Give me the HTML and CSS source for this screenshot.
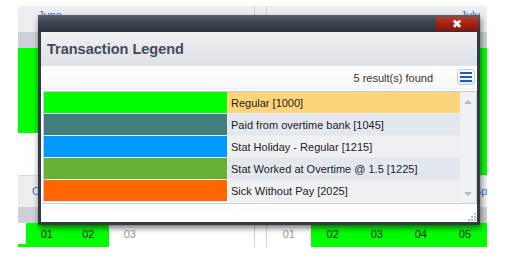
FILE: index.html
```html
<!DOCTYPE html>
<html>
<head>
<meta charset="utf-8">
<link rel="stylesheet" href="styles.css">
</head>
<body>
<div class="cal">
  <div class="cal-row first">
    <div class="month left">
      <div class="m-head"><a class="m-link">June</a></div>
      <div class="m-band"></div>
      <div class="m-body"><div class="days-block short"></div></div>
    </div>
    <div class="m-gap"></div>
    <div class="month right">
      <div class="m-head end"><a class="m-link">July</a></div>
      <div class="m-band"></div>
      <div class="m-body"><div class="days-block tall"></div></div>
    </div>
  </div>
  <div class="cal-row second">
    <div class="month left">
      <div class="m-head2"><a class="m-link">October</a></div>
      <div class="m-band"></div>
      <div class="days-row">
        <div class="day pad"></div>
        <div class="day on">01</div>
        <div class="day on">02</div>
        <div class="day off">03</div>
      </div>
    </div>
    <div class="m-gap2"></div>
    <div class="month right">
      <div class="m-head2 end"><a class="m-link">Spe</a></div>
      <div class="m-band"></div>
      <div class="days-row">
        <div class="day off wide">01</div>
        <div class="day on wide">02</div>
        <div class="day on wide">03</div>
        <div class="day on wide">04</div>
        <div class="day on wide">05</div>
      </div>
    </div>
  </div>
</div>

<div class="dialog">
  <div class="titlebar">
    <div class="close">&#x2716;</div>
  </div>
  <div class="d-head">Transaction Legend</div>
  <div class="toolbar">
    <span class="count">5 result(s) found</span>
    <div class="menu-btn">
      <svg width="12" height="10" viewBox="0 0 12 10"><rect x="0" y="0" width="12" height="2" fill="#1d5fb8"/><rect x="0" y="4" width="12" height="2" fill="#1d5fb8"/><rect x="0" y="8" width="12" height="2" fill="#1d5fb8"/></svg>
    </div>
  </div>
  <div class="grid">
    <div class="rows">
      <div class="row sel"><div class="swatch" style="background:#00ff00"></div><div class="label">Regular [1000]</div></div>
      <div class="row alt"><div class="swatch" style="background:#417f7e"></div><div class="label">Paid from overtime bank [1045]</div></div>
      <div class="row"><div class="swatch" style="background:#0099ff"></div><div class="label">Stat Holiday - Regular [1215]</div></div>
      <div class="row alt"><div class="swatch" style="background:#66b034"></div><div class="label">Stat Worked at Overtime @ 1.5 [1225]</div></div>
      <div class="row"><div class="swatch" style="background:#ff6600"></div><div class="label">Sick Without Pay [2025]</div></div>
    </div>
    <div class="scroll">
      <svg class="arr" width="8" height="5" viewBox="0 0 8 5"><path d="M0 5 L4 1 L8 5 Z" fill="#b5b8bc"/></svg>
      <svg class="arr" width="8" height="5" viewBox="0 0 8 5"><path d="M0 0 L4 4 L8 0 Z" fill="#b5b8bc"/></svg>
    </div>
  </div>
  <div class="d-foot">
    <svg class="grip" width="8" height="8" viewBox="0 0 8 8"><g fill="#b9bcc0"><rect x="6" y="0" width="2" height="2"/><rect x="3" y="3" width="2" height="2"/><rect x="6" y="3" width="2" height="2"/><rect x="0" y="6" width="2" height="2"/><rect x="3" y="6" width="2" height="2"/><rect x="6" y="6" width="2" height="2"/></g></svg>
  </div>
</div>
</body>
</html>
```
FILE: styles.css
```css
html, body {
  margin: 0;
  padding: 0;
}
body {
  width: 519px;
  height: 262px;
  overflow: hidden;
  position: relative;
  background: #ffffff;
  font-family: "Liberation Sans", Arial, sans-serif;
  font-size: 11px;
  color: #222;
}
.cal {
  margin: 6px 0 0 18px;
  width: 469px;
}
.cal-row {
  display: flex;
}
.month {
  display: flex;
  flex-direction: column;
}
.month.left {
  width: 236px;
  border-right: 1px solid #cfd3d8;
}
.month.right {
  width: 220px;
  border-left: 1px solid #cfd3d8;
  overflow: hidden;
}
.m-gap {
  width: 11px;
  background: linear-gradient(#eceef1 0, #eceef1 26px, #ffffff 26px);
}
.m-gap2 {
  width: 11px;
}
.m-head {
  height: 26px;
  background: #eceef1;
  padding: 3px 0 0 20px;
  box-sizing: border-box;
}
.m-head.end {
  padding: 3px 7px 0 0;
  text-align: right;
}
.m-head2 {
  height: 32px;
  border-top: 1px solid #d7dbe0;
  background: #eceef1;
  padding: 9px 0 0 14px;
  box-sizing: border-box;
}
.m-head2.end {
  padding: 9px 0 0 207px;
  white-space: nowrap;
}
.m-link {
  color: #3a6fc8;
  font-size: 11px;
  text-decoration: none;
}
.m-band {
  height: 16px;
  background: #cdd1d7;
}
.m-body {
  height: 127px;
  background: #ffffff;
}
.days-block {
  background: #00ff00;
}
.days-block.short {
  height: 85px;
}
.days-block.tall {
  height: 127px;
}
.days-row {
  display: flex;
  height: 24px;
}
.day {
  width: 41.5px;
  line-height: 22px;
  text-align: center;
  font-size: 11px;
  color: #111;
}
.day.pad {
  width: 8px;
  background: linear-gradient(#fff 0, #fff 21px, #00ff00 21px);
}
.day.on {
  background: #00ff00;
}
.day.off {
  color: #999;
}
.day.wide {
  width: 44.5px;
}
.day.wide:first-child {
  width: 44px;
}

/* dialog */
.dialog {
  position: absolute;
  left: 38px;
  top: 15px;
  width: 442px;
  height: 210px;
  box-sizing: border-box;
  border: 3px solid #333a45;
  border-top: 0;
  background: #ffffff;
  display: flex;
  flex-direction: column;
  box-shadow: 1px 3px 6px rgba(0, 0, 0, 0.55);
}
.titlebar {
  height: 17px;
  margin: 0 -3px;
  background: linear-gradient(#5a626e 0, #3d4551 45%, #2c323c 100%);
  display: flex;
  justify-content: flex-end;
  align-items: flex-start;
  padding: 2px 2px 0 0;
  box-sizing: border-box;
}
.close {
  width: 42px;
  height: 14px;
  background: linear-gradient(#c03a28 0, #a2220f 50%, #86180a 100%);
  color: #ffffff;
  font-family: "DejaVu Sans", sans-serif;
  font-size: 12px;
  font-weight: bold;
  line-height: 14px;
  text-align: center;
}
.d-head {
  height: 33px;
  background: linear-gradient(#f0f2f4 0, #e3e6ea 60%, #dfe2e6 100%);
  font-size: 14.5px;
  font-weight: bold;
  color: #3f4a5a;
  line-height: 34px;
  padding-left: 6px;
  border-bottom: 1px dotted #d0d4da;
}
.toolbar {
  height: 22px;
  display: flex;
  align-items: center;
  justify-content: flex-end;
  padding-right: 2px;
  background: linear-gradient(#ffffff 0, #f7f8f9 100%);
  border-bottom: 1px dotted #dde0e4;
}
.count {
  font-size: 11px;
  color: #333;
  margin-right: 24px;
  padding-top: 1px;
}
.menu-btn {
  width: 18px;
  height: 16px;
  box-sizing: border-box;
  border: 1px solid #c3cbd6;
  border-radius: 3px;
  background: linear-gradient(#ffffff 0, #e6ebf1 100%);
  display: flex;
  align-items: center;
  justify-content: center;
}
.grid {
  margin: 2px 0 0 2px;
  height: 113px;
  box-sizing: border-box;
  border: 1px solid #c9cdd2;
  display: flex;
}
.rows {
  flex: 1;
  display: flex;
  flex-direction: column;
}
.row {
  height: 22px;
  display: flex;
  box-sizing: border-box;
  border-bottom: 1px solid #e9ebee;
  background: #eef0f4;
}
.row.alt {
  background: #e3e8ef;
}
.row.sel {
  background: #fed47b;
}
.swatch {
  width: 183px;
}
.label {
  padding-left: 4px;
  line-height: 22px;
  font-size: 11px;
  color: #222;
  white-space: nowrap;
}
.scroll {
  width: 16px;
  background: #f0f1f2;
  display: flex;
  flex-direction: column;
  justify-content: space-between;
  align-items: center;
  padding: 7px 0 6px;
}
.arr {
  display: block;
}
.d-foot {
  flex: 1;
  display: flex;
  justify-content: flex-end;
  align-items: flex-end;
  padding: 0 1px 1px 0;
}
.grip {
  display: block;
}
```
